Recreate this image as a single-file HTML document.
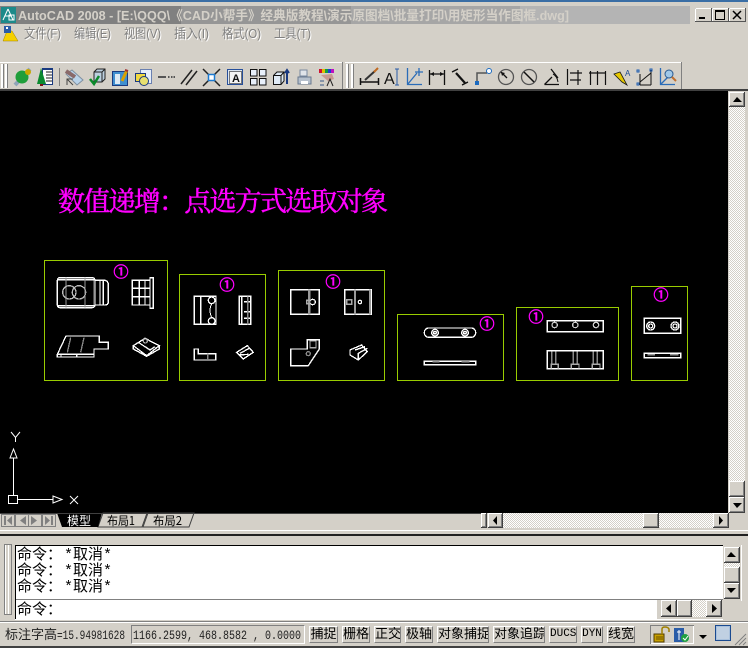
<!DOCTYPE html>
<html><head><meta charset="utf-8">
<style>
html,body{margin:0;padding:0;background:#d4d0c8;}
body{width:748px;height:648px;overflow:hidden;position:relative;font-family:"Liberation Sans","WenQuanYi Zen Hei","Noto Sans CJK SC",sans-serif;}
svg{position:absolute;left:0;top:0;}
.b{position:absolute;background:#d4d0c8;box-shadow:inset -1px -1px #404040,inset 1px 1px #fff,inset -2px -2px #808080;}
.d{position:absolute;background:conic-gradient(#fff 25%,#d4d0c8 0 50%,#fff 0 75%,#d4d0c8 0) 0 0/2px 2px;}
.s{position:absolute;top:626px;height:17px;box-sizing:border-box;border:1px solid;border-color:#fff #808080 #808080 #fff;font-size:13px;line-height:15px;text-align:center;color:#000;white-space:nowrap;overflow:hidden;font-family:"Liberation Mono","WenQuanYi Zen Hei","Noto Sans CJK SC",monospace;}
.c{position:absolute;left:17px;font:15px/16px "Noto Sans CJK SC","WenQuanYi Zen Hei",monospace;color:#000;white-space:pre;letter-spacing:0;}
.c span{margin-left:2px;font-family:"Liberation Mono","WenQuanYi Zen Hei","Noto Sans CJK SC",monospace}
</style></head><body>
<div style="position:absolute;left:0;top:0;width:748px;height:2px;background:#3a6ea5"></div>
<div style="position:absolute;left:0;top:91px;width:728px;height:422px;background:#000"></div>
<div style="position:absolute;left:0;top:89px;width:748px;height:2px;background:#404040"></div>

<div class="d" style="left:729px;top:107px;width:16px;height:390px"></div>
<div class="b" style="left:729px;top:92px;width:16px;height:15px"></div>
<div class="b" style="left:729px;top:481px;width:16px;height:16px"></div>
<div class="b" style="left:729px;top:497px;width:16px;height:16px"></div>

<div class="d" style="left:503px;top:513px;width:210px;height:15px"></div>
<div class="b" style="left:488px;top:513px;width:15px;height:15px"></div>
<div class="b" style="left:643px;top:513px;width:16px;height:15px"></div>
<div class="b" style="left:713px;top:513px;width:16px;height:15px"></div>
<div class="b" style="left:481px;top:513px;width:6px;height:15px"></div>

<div style="position:absolute;left:0;top:530px;width:748px;height:1px;background:#fff"></div>
<div style="position:absolute;left:0;top:534px;width:748px;height:2px;background:#202020"></div>

<div style="position:absolute;left:15px;top:545px;width:708px;height:74px;background:#fff;border-top:1px solid #000;border-left:1px solid #000;box-sizing:border-box"></div>
<div style="position:absolute;left:16px;top:599px;width:707px;height:1px;background:#808080"></div>
<div style="position:absolute;left:657px;top:600px;width:66px;height:19px;background:#d4d0c8"></div>
<div style="position:absolute;left:15px;top:619px;width:708px;height:1px;background:#fff"></div>
<div style="position:absolute;left:741px;top:545px;width:1px;height:56px;background:#fff"></div>
<div class="c" style="top:546px">命令&#xFF1A;<span>*取消*</span></div>
<div class="c" style="top:562px">命令&#xFF1A;<span>*取消*</span></div>
<div class="c" style="top:578px">命令&#xFF1A;<span>*取消*</span></div>
<div class="c" style="top:601px">命令&#xFF1A;</div>

<div class="b" style="left:724px;top:547px;width:16px;height:16px"></div>
<div class="d" style="left:724px;top:563px;width:16px;height:4px"></div>
<div class="b" style="left:724px;top:567px;width:16px;height:16px"></div>
<div class="b" style="left:724px;top:583px;width:16px;height:16px"></div>

<div class="d" style="left:692px;top:600px;width:14px;height:17px"></div>
<div class="b" style="left:661px;top:600px;width:16px;height:17px"></div>
<div class="b" style="left:677px;top:600px;width:15px;height:17px"></div>
<div class="b" style="left:706px;top:600px;width:16px;height:17px"></div>

<div style="position:absolute;left:0;top:621px;width:748px;height:1px;background:#808080"></div>
<div style="position:absolute;left:0;top:622px;width:748px;height:1px;background:#fff"></div>
<div style="position:absolute;left:0;top:646px;width:748px;height:2px;background:#404040"></div>

<div style="position:absolute;left:131px;top:625px;width:174px;height:19px;box-sizing:border-box;border:1px solid;border-color:#808080 #fff #fff #808080"></div>
<div class="s" style="left:309px;width:29px">捕捉</div>
<div class="s" style="left:342px;width:28px">栅格</div>
<div class="s" style="left:374px;width:27px">正交</div>
<div class="s" style="left:405px;width:28px">极轴</div>
<div class="s" style="left:437px;width:52px">对象捕捉</div>
<div class="s" style="left:493px;width:52px">对象追踪</div>
<div class="s" style="left:549px;width:28px;font-size:11px">DUCS</div>
<div class="s" style="left:581px;width:22px;font-size:11px">DYN</div>
<div class="s" style="left:607px;width:28px">线宽</div>

<svg width="748" height="648" viewBox="0 0 748 648" font-family="'Liberation Sans','Noto Sans CJK SC',sans-serif">
<!-- status text -->
<text x="5" y="639" font-size="13" fill="#222" font-family="'WenQuanYi Zen Hei','Noto Sans CJK SC',sans-serif">标注字高</text>
<text x="57" y="639" font-size="13" fill="#222" font-family="'Liberation Mono',monospace" textLength="68" lengthAdjust="spacingAndGlyphs">=15.94981628</text>
<text x="133" y="639" font-size="13" fill="#222" font-family="'Liberation Mono',monospace" textLength="168" lengthAdjust="spacingAndGlyphs">1166.2599, 468.8582 , 0.0000</text>
<!-- title -->
<rect x="0" y="6" width="181" height="18" fill="#808080"/>
<rect x="181" y="6" width="170" height="18" fill="#969696"/>
<rect x="351" y="6" width="169" height="18" fill="#a6a6a6"/>
<rect x="520" y="6" width="170" height="18" fill="#b4b4b4"/>
<rect x="1" y="7" width="15" height="16" fill="#1d8a8a"/>
<path d="M3 20L8 9M8 9L13 20M5 16H11" stroke="#fff" fill="none"/>
<rect x="9" y="15" width="5" height="5" fill="none" stroke="#fff"/>
<text x="18" y="20" font-size="13" font-weight="bold" fill="#d4d0c8" textLength="551" lengthAdjust="spacingAndGlyphs">AutoCAD 2008 - [E:\QQQ\《CAD小帮手》经典版教程\演示原图档\批量打印\用矩形当作图框.dwg]</text>
<!-- window buttons -->
<g>
<rect x="695.500" y="8.500" width="16" height="13" fill="#d4d0c8" stroke="#555"/><path d="M695.500 8.500H711M695.500 8.500V21" stroke="#fff"/><rect x="699" y="17" width="6" height="2" fill="#000"/>
<rect x="712.500" y="8.500" width="16" height="13" fill="#d4d0c8" stroke="#555"/><path d="M712.500 8.500H728M712.500 8.500V21" stroke="#fff"/><rect x="715.500" y="10.500" width="9" height="9" fill="none" stroke="#000"/><rect x="715" y="10" width="10" height="2" fill="#000"/>
<rect x="729.500" y="8.500" width="16" height="13" fill="#d4d0c8" stroke="#555"/><path d="M729.500 8.500H745M729.500 8.500V21" stroke="#fff"/><path d="M733 11L741 19M741 11L733 19" stroke="#000" stroke-width="1.500"/>
</g>
<!-- menu -->
<path d="M3 41L7 31H12L18 41Z" fill="#f5d000" stroke="#a08000" stroke-width=".5"/><rect x="4" y="26" width="7" height="7" fill="#2a5ca8"/><rect x="6" y="27" width="2" height="2" fill="#fff"/>
<g font-size="13" fill="#fff" transform="translate(1 1)">
<text x="24" y="38" textLength="37" lengthAdjust="spacingAndGlyphs">文件(F)</text>
<text x="74" y="38" textLength="37" lengthAdjust="spacingAndGlyphs">编辑(E)</text>
<text x="124" y="38" textLength="37" lengthAdjust="spacingAndGlyphs">视图(V)</text>
<text x="174" y="38" textLength="35" lengthAdjust="spacingAndGlyphs">插入(I)</text>
<text x="222" y="38" textLength="39" lengthAdjust="spacingAndGlyphs">格式(O)</text>
<text x="274" y="38" textLength="37" lengthAdjust="spacingAndGlyphs">工具(T)</text>
</g>
<g font-size="13" fill="#808080">
<text x="24" y="38" textLength="37" lengthAdjust="spacingAndGlyphs">文件(F)</text>
<text x="74" y="38" textLength="37" lengthAdjust="spacingAndGlyphs">编辑(E)</text>
<text x="124" y="38" textLength="37" lengthAdjust="spacingAndGlyphs">视图(V)</text>
<text x="174" y="38" textLength="35" lengthAdjust="spacingAndGlyphs">插入(I)</text>
<text x="222" y="38" textLength="39" lengthAdjust="spacingAndGlyphs">格式(O)</text>
<text x="274" y="38" textLength="37" lengthAdjust="spacingAndGlyphs">工具(T)</text>
</g>
<!-- toolbars -->
<rect x="0" y="62" width="342" height="1" fill="#fff"/><rect x="342" y="62" width="1" height="27" fill="#808080"/>
<rect x="345" y="62" width="337" height="1" fill="#fff"/><rect x="681" y="62" width="1" height="27" fill="#808080"/>
<g fill="#fff"><rect x="1" y="64" width="2" height="24"/><rect x="5" y="64" width="2" height="24"/><rect x="346" y="64" width="2" height="24"/><rect x="351" y="64" width="2" height="24"/></g>
<g fill="#808080"><rect x="3" y="64" width="1" height="24"/><rect x="7" y="64" width="1" height="24"/><rect x="348" y="64" width="1" height="24"/><rect x="353" y="64" width="1" height="24"/></g>
<rect x="59" y="68" width="1" height="18" fill="#808080"/>
<!-- icon 1 -->
<path d="M15 85L30 69" stroke="#8fa4b8" stroke-width="4"/><circle cx="22" cy="77" r="6.500" fill="#1f9e3a"/><circle cx="28" cy="72" r="3" fill="#c8a800"/>
<!-- icon 2 -->
<rect x="42.500" y="68.500" width="10" height="16" fill="#fff" stroke="#1a3a80"/><rect x="42" y="68" width="11" height="2" fill="#1a3a80"/><path d="M46 72H52M46 75H52M46 78H52M46 81H52" stroke="#222"/><path d="M41 68L37 84H46Z" fill="#0c8a30"/><rect x="40" y="84" width="3" height="2" fill="#7a1010"/>
<!-- icon 3 -->
<path d="M66 74L72 70L83 80L77 85Z" fill="#b9d3ea" stroke="#8090a0"/><path d="M66 71L75 77" stroke="#8a6a6a" stroke-width="4"/><path d="M67 85V79H73M67 79L73 85" stroke="#444" fill="none"/>
<!-- icon 4 -->
<path d="M94 72L97 69H105V79L102 82H94Z" fill="#bcd0e0" stroke="#222"/><path d="M94 72H102V82M102 72L105 69" stroke="#222" fill="none"/><path d="M90 79L94 84L99 76" stroke="#0a8a2a" stroke-width="2.500" fill="none"/>
<!-- icon 5 -->
<rect x="112.500" y="71.500" width="15" height="14" fill="#3f8fd0" stroke="#1a3a80"/><rect x="115" y="74" width="5" height="10" fill="#dbe9f5"/><path d="M122 81L127 70" stroke="#d8a000" stroke-width="3"/><path d="M125 70L128 71" stroke="#a03030" stroke-width="2"/>
<!-- icon 6 -->
<rect x="140.500" y="69.500" width="11" height="14" fill="#e6eefa" stroke="#6a80b0"/><rect x="135.500" y="73.500" width="10" height="8" fill="#f0d840" stroke="#1a3a80"/><circle cx="144" cy="81" r="4.500" fill="#e8e070" stroke="#1a3a80"/>
<!-- icon 7 -->
<path d="M158 77H166" stroke="#555" stroke-width="2"/><path d="M168 77H169.500M171 77H172.500M173.500 77H175" stroke="#555" stroke-width="2"/>
<!-- icon 8 -->
<path d="M181 84L192 70M186 85L197 71" stroke="#222" stroke-width="1.500"/>
<!-- icon 9 -->
<path d="M203 69L220 86M220 69L203 86" stroke="#222" stroke-width="1.500"/><rect x="208.500" y="74.500" width="6" height="6" fill="#fff" stroke="#1c7ad0" stroke-width="1.500"/>
<!-- icon 10 -->
<rect x="227.500" y="69.500" width="15" height="15" fill="#dce6f2" stroke="#274f9a"/><rect x="229.500" y="71.500" width="12" height="12" fill="#f4f4f4" stroke="#000" stroke-dasharray="1 1"/>
<text x="236" y="82" font-size="11" text-anchor="middle" font-weight="bold" fill="#111">A</text>
<!-- icon 11 -->
<g fill="#e8f0fa" stroke="#111"><rect x="250.500" y="69.500" width="6.500" height="6.500"/><rect x="259.500" y="69.500" width="6.500" height="6.500"/><rect x="250.500" y="78.500" width="6.500" height="6.500"/><rect x="259.500" y="78.500" width="6.500" height="6.500"/></g>
<!-- icon 12 -->
<path d="M273.500 75.500L277 72H284V81L281 84.500H273.500Z" fill="#dfeaf5" stroke="#111"/><path d="M273.500 75.500H281V84.500M281 75.500L284 72" stroke="#111" fill="none"/><path d="M287 84V71M285 73L287 70L289 73" stroke="#1a3a80" stroke-width="2" fill="none"/>
<!-- icon 13 -->
<rect x="300" y="70" width="7" height="6" fill="#e0e4ea" stroke="#7a8aa0"/><path d="M298 77H311V84H298Z" fill="#b6c0cc" stroke="#6a7a90"/><rect x="301" y="81" width="7" height="3" fill="#fff"/>
<!-- icon 14 -->
<rect x="319" y="69" width="3" height="4" fill="#d01030"/><rect x="322" y="69" width="3" height="4" fill="#e0c000"/><rect x="325" y="69" width="3" height="4" fill="#10a040"/><rect x="328" y="69" width="3" height="4" fill="#2040d0"/><rect x="331" y="69" width="3" height="4" fill="#c010c0"/>
<path d="M321 75L332 74L334 79L328 81Z" fill="#c89890"/><path d="M320 81H324M320 85H324" stroke="#3a5a8a"/><path d="M327 86L330 79L333 86" stroke="#222" fill="none"/>
<!-- dim icons -->
<path d="M360.500 78V85M378.500 78V85M360 82H379" stroke="#111" stroke-width="1.500" fill="none"/><path d="M365 80L375 71" stroke="#333" stroke-width="2"/><path d="M374 72L378 68" stroke="#c06a20" stroke-width="2"/>
<text x="384" y="84" font-size="16" fill="#111">A</text><path d="M395 69H399M397 69V85M395 85H399" stroke="#2a5ca8" fill="none"/>
<path d="M407.500 68V84.500H422M407.500 84.500L417 73M419 68V76M415 72H423" stroke="#2a6cb8" stroke-width="1.300" fill="none"/>
<path d="M429.500 70V85M444.500 70V85M430 74H444" stroke="#111" stroke-width="1.300" fill="none"/><path d="M430 74L434 72V76ZM444 74L440 72V76Z" fill="#111"/>
<path d="M452 72L458 69M462 85L468 82" stroke="#111" stroke-width="1.300" fill="none"/><path d="M456 73L465 83" stroke="#111" stroke-width="2.200"/>
<path d="M477 85V73H487" stroke="#555" stroke-width="1.500" fill="none"/><rect x="475" y="81" width="4" height="4" fill="#1a6ac0"/><circle cx="489" cy="71" r="2.500" fill="#fff" stroke="#1a6ac0"/>
<circle cx="506" cy="77" r="7.500" fill="none" stroke="#555" stroke-width="1.300"/><path d="M501 72L507 78" stroke="#111" stroke-width="1.300"/><path d="M501 72L505 73L502 76Z" fill="#111"/>
<circle cx="529" cy="77" r="7.500" fill="none" stroke="#555" stroke-width="1.300"/><path d="M524 72L534 82" stroke="#111" stroke-width="1.500"/>
<path d="M544.500 84.500H559M544.500 84.500L552 77M551 69L558 78" stroke="#111" stroke-width="1.300" fill="none"/><path d="M553 74Q557 76 558 82" stroke="#111" fill="none"/>
<path d="M567.500 69V85M570 73H582M570 80H581M578 70V85" stroke="#111" stroke-width="1.200" fill="none"/>
<path d="M590.500 71V85M597.500 71V85M605.500 71V85M589 73H606" stroke="#111" stroke-width="1.200" fill="none"/>
<path d="M614 74L620 72L627 85L622 82Z" fill="#e6c800" stroke="#1a1a1a" stroke-width=".8"/><text x="625" y="76" font-size="8" fill="#1a4a90">A</text>
<path d="M640 85V74M640 85H651M640 82L651 73M651 70V85" stroke="#111" fill="none"/><g fill="none" stroke="#1a5ab0"><rect x="637" y="70" width="2" height="2"/><rect x="650" y="69" width="2" height="2"/><rect x="637" y="83" width="2" height="2"/></g>
<path d="M660.500 68V84.500H675M660.500 84.500L669 76" stroke="#2a6cb8" stroke-width="1.300" fill="none"/><circle cx="669" cy="74" r="4" fill="#a0c8e8" stroke="#2a5a90"/><path d="M672 77L676 81" stroke="#c07030" stroke-width="2"/>

<!-- canvas text -->
<text x="58" y="211" font-family="'Noto Serif CJK SC','Noto Sans CJK SC',serif" font-size="27" fill="#ff00ff" stroke="#ff00ff" stroke-width=".5" textLength="330" lengthAdjust="spacing">数值递增&#xFF1A;点选方式选取对象</text>
<!-- frames -->
<g fill="none" stroke="#99cc00" shape-rendering="crispEdges">
<rect x="44.500" y="260.500" width="123" height="120"/>
<rect x="179.500" y="274.500" width="86" height="106"/>
<rect x="278.500" y="270.500" width="106" height="110"/>
<rect x="397.500" y="314.500" width="106" height="66"/>
<rect x="516.500" y="307.500" width="102" height="73"/>
<rect x="631.500" y="286.500" width="56" height="94"/>
</g>
<g font-family="'Noto Sans CJK SC',sans-serif" font-size="15" fill="#ff00ff" stroke="#ff00ff" stroke-width=".7" text-anchor="middle">
<text x="121" y="277">①</text><text x="227" y="290">①</text><text x="333" y="287">①</text><text x="487" y="329">①</text><text x="536" y="322">①</text><text x="661" y="300">①</text>
</g>
<!-- drawings group 1 (zoom coords) -->
<g transform="translate(40 255) scale(.3333)" fill="none" stroke="#fff" stroke-width="4" shape-rendering="crispEdges">
<rect x="52" y="68" width="113" height="90" rx="8"/><path d="M165 76H195Q205 78 205 90V140Q205 150 195 150H165M180 76V150M190 76V150"/><circle cx="88" cy="112" r="20" stroke="#bbb"/><circle cx="117" cy="112" r="20" stroke="#bbb"/><path d="M52 74H165M52 152H165" /><path d="M78 68V158M135 68V158M163 76V150" stroke="#999" stroke-width="4"/>
<path d="M277 76H330V150H277ZM330 68H340V160H330ZM277 100H330M277 125H330M298 76V150M315 76V150"/>
<path d="M52 298L78 243H178V262H205V282H162V306H52ZM52 298H162M63 298V306M110 298V306" /><path d="M92 248L82 292M132 248L122 292" stroke="#888"/>
<path d="M280 272L315 250L358 272L320 302ZM280 272V282L320 304L358 282V272M295 262L330 285M330 285L345 275"/><circle cx="316" cy="258" r="6" stroke="#aaa"/>
<rect x="463" y="124" width="65" height="84"/><path d="M482 124V208"/><circle cx="515" cy="136" r="10"/><circle cx="515" cy="198" r="10"/><path d="M515 146Q505 166 515 188" stroke-width="3"/>
<rect x="598" y="124" width="34" height="84"/><path d="M605 124V208M612 140H632M612 170H632M612 190H632"/><path d="M623 124V208" stroke="#888"/>
<path d="M463 282H475V296H527V315H463Z"/><path d="M503 296V315" stroke="#888"/>
<path d="M590 292L622 272L640 292L610 312ZM600 295L628 280M596 300L625 298"/>
<rect x="752" y="104" width="86" height="74"/><path d="M808 104V178" stroke="#999" stroke-width="8"/><circle cx="818" cy="141" r="8"/><rect x="800" y="136" width="10" height="10" stroke="#aaa"/>
<rect x="914" y="104" width="80" height="74"/><path d="M945 104V178M990 104V178" stroke="#999" stroke-width="5"/><circle cx="960" cy="141" r="5"/><rect x="920" y="134" width="15" height="14" stroke="#aaa"/>
<path d="M752 282H802V254H838V282L805 332H752Z"/><rect x="810" y="258" width="18" height="20" stroke="#aaa"/><circle cx="805" cy="296" r="6" stroke="#888"/>
<path d="M930 285L965 270L982 290L955 315L930 300ZM945 285L975 275M955 315V295L982 280"/>
</g>
<!-- drawings group 2 -->
<g transform="translate(390 280) scale(.3333)" fill="none" stroke="#fff" stroke-width="4" shape-rendering="crispEdges">
<rect x="103" y="144" width="154" height="28" rx="13"/><circle cx="135" cy="158" r="10"/><circle cx="135" cy="158" r="4"/><circle cx="225" cy="158" r="10"/><circle cx="225" cy="158" r="4"/>
<rect x="103" y="244" width="154" height="10"/><path d="M128 245H148M215 245H238" stroke="#999" stroke-width="5"/>
<rect x="472" y="122" width="168" height="33"/><circle cx="494" cy="135" r="8" stroke="#ccc"/><circle cx="556" cy="135" r="8" stroke="#ccc"/><circle cx="618" cy="135" r="8" stroke="#ccc"/>
<rect x="472" y="212" width="168" height="54"/><path d="M485 214V253M497 214V253M550 214V253M562 214V253M610 214V253M622 214V253" stroke="#888"/><path d="M484 266V253H505V266M544 266V253H567V266M607 266V253H630V266" stroke="#aaa"/>
<rect x="763" y="115" width="109" height="45" stroke-width="5"/><circle cx="782" cy="138" r="12"/><circle cx="782" cy="138" r="6"/><circle cx="855" cy="138" r="12"/><circle cx="855" cy="138" r="6"/>
<rect x="763" y="220" width="109" height="13"/><path d="M772 224H795M840 224H865" stroke="#999" stroke-width="4"/>
</g>
<!-- UCS -->
<g stroke="#fff" fill="none" shape-rendering="crispEdges">
<rect x="8.500" y="495.500" width="9" height="8"/><path d="M13.500 495V458M18 499.500H53"/>
</g>
<path d="M13.500 449L10 458H17ZM62 499.500L53 496V503Z" fill="none" stroke="#fff"/>
<path d="M11 432L15.500 437.500L20 432M15.500 437.500V442" stroke="#fff" fill="none"/>
<path d="M70 496L78 504M78 496L70 504" stroke="#fff" fill="none"/>
<!-- tabs -->
<g fill="#d4d0c8" stroke="#808080"><rect x="1.500" y="514.500" width="13" height="12"/><rect x="15.500" y="514.500" width="13" height="12"/><rect x="28.500" y="514.500" width="13" height="12"/><rect x="42.500" y="514.500" width="13" height="12"/></g>
<g fill="#808080"><rect x="4" y="516" width="2" height="9"/><path d="M12 516V525L7 520.500Z"/><path d="M26 516V525L20 520.500Z"/><path d="M31 516V525L37 520.500Z"/><path d="M45 516V525L50 520.500Z"/><rect x="51" y="516" width="2" height="9"/></g>
<path d="M98 527L103 513H147L142 527Z" fill="#d4d0c8" stroke="#404040"/>
<path d="M143 527L148 513H194L189 527Z" fill="#d4d0c8" stroke="#404040"/>
<path d="M57 513L62 527H98L102 513Z" fill="#000"/>
<rect x="0" y="513" width="481" height="1" fill="#404040"/>
<g font-family="'WenQuanYi Zen Hei','Noto Sans CJK SC',sans-serif" font-size="12">
<text x="67" y="525" fill="#fff">模型</text>
<text x="107" y="525" fill="#000" textLength="28" lengthAdjust="spacingAndGlyphs">布局1</text>
<text x="153" y="525" fill="#000" textLength="29" lengthAdjust="spacingAndGlyphs">布局2</text>
</g>
<!-- arrows -->
<g fill="#000">
<path d="M737 97L733 102H742Z"/><path d="M737 508L733 503H742Z"/>
<path d="M493 520.500L497 516V525Z"/><path d="M723 520.500L719 516V525Z"/>
<path d="M731 552L727 557H736Z"/><path d="M731 593L727 588H736Z"/>
<path d="M666 608.500L671 604V613Z"/><path d="M717 608.500L712 604V613Z"/>
<path d="M699 635H707L703 639Z"/>
</g>
<!-- grip left of cmd -->
<rect x="4.500" y="544.500" width="7" height="70" fill="#d4d0c8" stroke="#808080"/><path d="M5.500 545V614M8.500 545V614" stroke="#fff"/>
<!-- status icons -->
<rect x="650.500" y="625.500" width="43" height="18" fill="#d4d0c8" stroke="#808080"/><path d="M651 643.500H693.500V626" stroke="#fff" fill="none"/>
<rect x="654" y="634" width="10" height="8" fill="#c8a000" stroke="#503c00"/><path d="M656 637H663M656 639H663" stroke="#6a5000"/>
<path d="M662 634V629Q662 627 665 627T669 629V632" stroke="#a08000" stroke-width="1.500" fill="none"/>
<rect x="674" y="628" width="10" height="14" fill="#2a5ca8"/><path d="M679 630V640M677 632H681" stroke="#fff"/><circle cx="685" cy="638" r="4" fill="#20a040"/><path d="M683 638L685 640L688 636" stroke="#fff" fill="none"/>
<rect x="715.500" y="625.500" width="15" height="15" fill="#a8c0dc" stroke="#1a4a90"/><rect x="717" y="627" width="12" height="12" fill="#c0d0e2"/>
<path d="M735 645L746 634M739 645L746 638M743 645L746 642" stroke="#808080" fill="none"/>
</svg>
</body></html>
